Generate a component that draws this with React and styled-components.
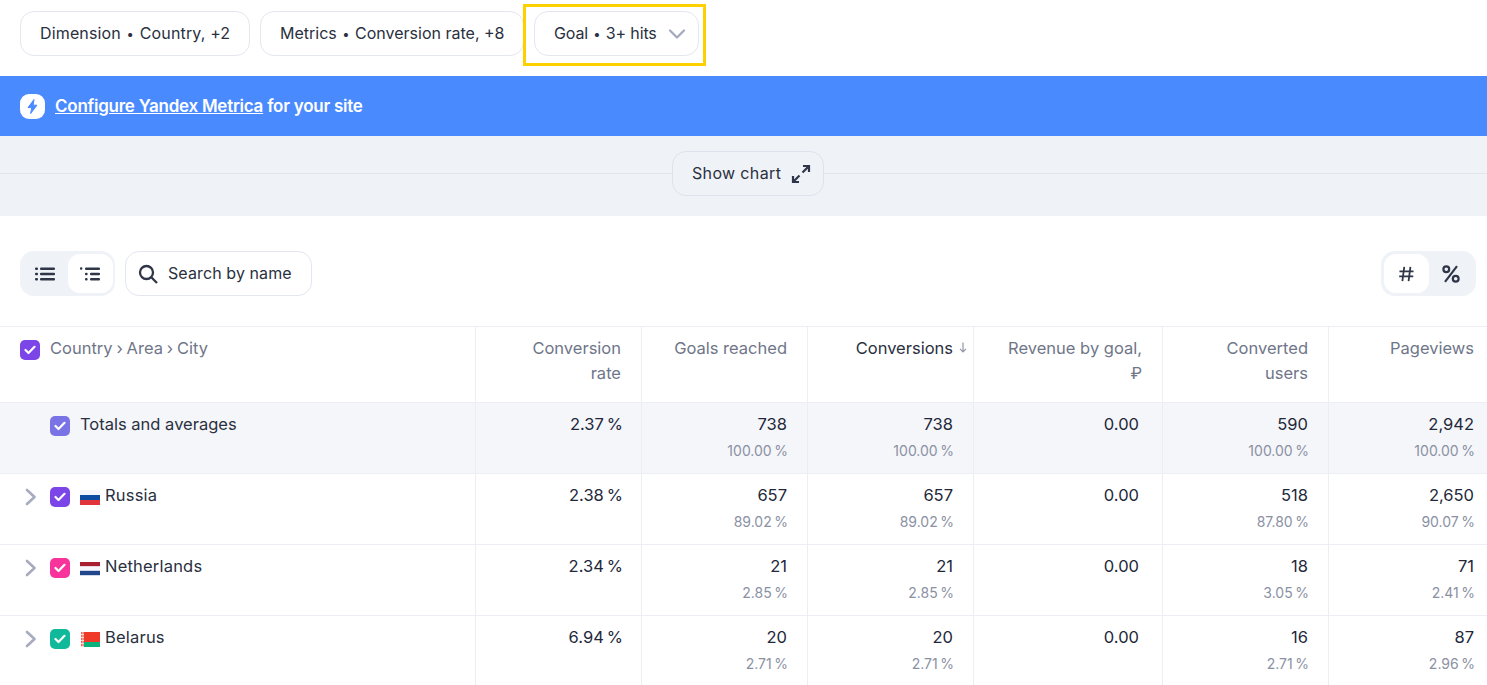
import React from "react";
import styled, { createGlobalStyle } from "styled-components";

const Global = createGlobalStyle`
  html, body { margin: 0; padding: 0; background: #fff; overflow: hidden; }
  body { font-family: Inter, "Noto Sans", sans-serif; color: #2a3040; font-size: 16px; }
`;

const Page = styled.div`
  width: 1487px;
  height: 685px;
  overflow: hidden;
  position: relative;
`;

const FilterBar = styled.div`
  display: flex;
  gap: 10px;
  height: 76px;
  padding: 11px 0 0 20px;
  box-sizing: border-box;
`;

const Pill = styled.button`
  height: 45px;
  width: ${(p) => p.$w}px;
  flex: none;
  box-sizing: border-box;
  border: 1px solid ${(p) => p.$line || "#e4e6f0"};
  border-radius: 14px;
  background: ${(p) => p.$bg || "#fff"};
  font: inherit;
  font-size: 16px;
  color: #2a3040;
  padding: 0 0 0 ${(p) => p.$pad ?? 19}px;
  display: flex;
  align-items: center;
  gap: ${(p) => p.$gap || 11}px;
  white-space: nowrap;
`;

const PillLabel = styled.span`
  position: relative;
  top: -1px;
  letter-spacing: ${(p) => p.$ls || 0}px;
`;

const Dot = styled.span`
  font-size: 13px;
  margin: 0 1px;
`;

const Highlight = styled.div`
  position: absolute;
  left: 523px;
  top: 4px;
  width: 183px;
  height: 62px;
  box-sizing: border-box;
  border: 3px solid #fdd000;
  pointer-events: none;
`;

const Banner = styled.div`
  height: 60px;
  background: #4a8aff;
  color: #fff;
  display: flex;
  align-items: center;
  padding-left: 20px;
  gap: 10px;
  font-weight: 600;
  font-size: 17px;
  letter-spacing: -0.25px;
  a { color: #fff; text-decoration: underline; }
`;

const ChartStrip = styled.div`
  height: 80px;
  box-sizing: border-box;
  padding: 15px 0 0 672px;
  background: #eff2f7;
  background-image: linear-gradient(#e2e5ee, #e2e5ee);
  background-size: 100% 1px;
  background-position: 0 37px;
  background-repeat: no-repeat;
`;

const Toolbar = styled.div`
  height: 110px;
  box-sizing: border-box;
  padding: 35px 11px 0 20px;
  display: flex;
  align-items: flex-start;
  gap: 10px;
`;

const Segment = styled.div`
  display: flex;
  height: 45px;
  box-sizing: border-box;
  padding: 3px 2px 3px 3px;
  background: #eff2f7;
  border-radius: 14px;
  margin-left: ${(p) => (p.$end ? "auto" : 0)};
`;

const SegItem = styled.div`
  width: 45px;
  height: 39px;
  box-sizing: border-box;
  padding-right: 1px;
  border-radius: 12px;
  background: ${(p) => (p.$active ? "#fff" : "transparent")};
  display: flex;
  align-items: center;
  justify-content: center;
`;

const Table = styled.div`
  border-top: 1px solid #eceef4;
`;

const Row = styled.div`
  display: grid;
  grid-template-columns: 475px 166px 166px 166px 189px 166px 159px;
  height: ${(p) => p.$h || 71}px;
  box-sizing: border-box;
  border-bottom: 1px solid #eceef4;
  background: ${(p) => p.$bg || "#fff"};
`;

const NameCell = styled.div`
  display: flex;
  align-items: flex-start;
  padding: 10px 0 0 ${(p) => p.$pad || 20}px;
  box-sizing: border-box;
`;

const NameText = styled.span`
  font-size: 16.5px;
  line-height: 24px;
  margin-top: -1px;
  letter-spacing: ${(p) => p.$ls || 0}px;
  word-spacing: ${(p) => p.$ws || 0}px;
  color: ${(p) => p.$c || "#2a3040"};
  margin-left: ${(p) => p.$ml ?? 10}px;
`;

const Arrow = styled.span`
  width: 20px;
  height: 24px;
  margin: 1px 10px 0 0;
  display: flex;
  align-items: center;
  justify-content: center;
  padding-left: 1px;
  box-sizing: border-box;
`;

const Check = styled.span`
  width: 20px;
  height: 20px;
  margin-top: 3px;
  border-radius: 5px;
  background: ${(p) => p.$c};
  display: flex;
  align-items: center;
  justify-content: center;
  flex: none;
`;

const FlagBox = styled.span`
  margin: 5px 0 0 10px;
  width: 20px;
  height: 15px;
  display: block;
  flex: none;
`;

const HeadCell = styled.div`
  border-left: 1px solid #eceef4;
  padding: 9px ${(p) => (p.$last ? 13 : 20)}px 0 0;
  text-align: right;
  font-size: 16.5px;
  line-height: 25px;
  color: ${(p) => (p.$dark ? "#2a3040" : "#6f7689")};
  position: relative;
`;

const SortMark = styled.span`
  position: absolute;
  right: 6px;
  top: 14px;
  font-size: 0;
`;

const Cell = styled.div`
  border-left: 1px solid #eceef4;
  padding: 9px ${(p) => p.$pr}px 0 0;
  text-align: right;
`;

const Value = styled.div`
  font-size: 16.5px;
  line-height: 24px;
  color: #22283a;
`;

const Share = styled.div`
  font-size: 14px;
  line-height: 20px;
  margin: 5px -1px 0 0;
  color: #8a91a3;
`;

const ink = "#2f3648";

const CheckIcon = () => (
  <svg width="12" height="10" viewBox="0 0 12 10" fill="none">
    <path d="M1.5 5l3 3 6-6.2" stroke="#fff" strokeWidth="2.2" strokeLinecap="round" strokeLinejoin="round" />
  </svg>
);

const Chevron = () => (
  <svg width="12" height="18" viewBox="0 0 12 18" fill="none">
    <path d="M2 2l7.5 7L2 16" stroke="#a6abbf" strokeWidth="2.6" strokeLinecap="round" strokeLinejoin="round" />
  </svg>
);

const ChevronDown = () => (
  <svg width="18" height="12" viewBox="0 0 18 12" fill="none">
    <path d="M2 2.5l7 7 7-7" stroke="#a3a9bd" strokeWidth="2.2" strokeLinecap="round" strokeLinejoin="round" />
  </svg>
);

const Bolt = () => (
  <svg width="25" height="25" viewBox="0 0 25 25">
    <rect width="25" height="25" rx="9" fill="#fff" />
    <path d="M14 5.5L8 13.6h3.7l-1 5.9 6.2-8.3h-3.8z" fill="#4a8aff" stroke="#4a8aff" strokeWidth="1" strokeLinejoin="round" />
  </svg>
);

const Expand = () => (
  <svg width="20" height="20" viewBox="0 0 20 20" fill="none" stroke={ink} strokeWidth="2.2">
    <path d="M12 2h6v6M18 2l-6.5 6.5M8 18H2v-6M2 18l6.5-6.5" />
  </svg>
);

const ListIcon = () => (
  <svg width="20" height="14" viewBox="0 0 20 14" fill={ink}>
    <rect x="0" y="0.5" width="3" height="2.6" rx="1" />
    <rect x="0" y="5.7" width="3" height="2.6" rx="1" />
    <rect x="0" y="10.9" width="3" height="2.6" rx="1" />
    <rect x="5" y="0.5" width="15" height="2.6" rx="1" />
    <rect x="5" y="5.7" width="15" height="2.6" rx="1" />
    <rect x="5" y="10.9" width="15" height="2.6" rx="1" />
  </svg>
);

const TreeIcon = () => (
  <svg width="20" height="14" viewBox="0 0 20 14" fill={ink}>
    <rect x="0" y="0.3" width="2.4" height="2.4" rx="1" />
    <rect x="5" y="5.7" width="2.6" height="2.6" rx="1" />
    <rect x="5" y="10.9" width="2.6" height="2.6" rx="1" />
    <rect x="5" y="0.5" width="15" height="2.6" rx="1" />
    <rect x="10" y="5.7" width="10" height="2.6" rx="1" />
    <rect x="10" y="10.9" width="10" height="2.6" rx="1" />
  </svg>
);

const Search = () => (
  <svg width="20" height="20" viewBox="0 0 20 20" fill="none" stroke={ink} strokeWidth="2.3">
    <circle cx="8.5" cy="8.5" r="6.5" />
    <path d="M13.3 13.3L19 19" />
  </svg>
);

const Hash = () => (
  <svg width="15" height="16" viewBox="0 0 16 16" fill="none" stroke={ink} strokeWidth="1.9">
    <path d="M5.6 0.5L3.6 15.5M12.2 0.5L10.2 15.5M0.5 5.2h15M0.2 10.6h15" />
  </svg>
);

const Percent = () => (
  <svg width="18" height="18" viewBox="0 0 18 18" fill="none" stroke={ink} strokeWidth="2.2">
    <circle cx="4.3" cy="4.3" r="2.9" />
    <circle cx="13.7" cy="13.7" r="2.9" />
    <path d="M15 1.2L3 16.8" />
  </svg>
);

const SortArrow = () => (
  <svg width="8" height="11" viewBox="0 0 8 11" fill="none" stroke="#9095a8" strokeWidth="1.2">
    <path d="M4 0.5v9M1 6.8l3 3 3-3" />
  </svg>
);

const Flag = ({ code }) => {
  if (code === "ru")
    return (
      <FlagBox>
        <svg width="20" height="15" viewBox="0 0 20 15">
          <rect width="20" height="5" fill="#f5f6fb" />
          <rect y="5" width="20" height="5" fill="#0c4da2" />
          <rect y="10" width="20" height="5" fill="#e0353a" />
        </svg>
      </FlagBox>
    );
  if (code === "nl")
    return (
      <FlagBox>
        <svg width="20" height="15" viewBox="0 0 20 15">
          <rect y="1" width="20" height="4.4" fill="#a91f32" />
          <rect y="5.4" width="20" height="4.4" fill="#f5f6fb" />
          <rect y="9.8" width="20" height="4.4" fill="#21468b" />
        </svg>
      </FlagBox>
    );
  return (
    <FlagBox>
      <svg width="20" height="15" viewBox="0 0 20 15">
        <rect x="4" width="16" height="10" fill="#ef3a2a" />
        <rect x="4" y="10" width="16" height="5" fill="#0bb27e" />
        <rect x="1" width="3" height="15" fill="#f9d7d2" />
        <path d="M1 1h3M1 4h3M1 7h3M1 10h3M1 13h3" stroke="#e5493a" strokeWidth="1.4" strokeDasharray="1.5 .8" />
      </svg>
    </FlagBox>
  );
};

const rows = [
  { name: "Russia", code: "ru", color: "#7c45e8", v: ["2.38\u2009%", ["657", "89.02\u2009%"], ["657", "89.02\u2009%"], "0.00", ["518", "87.80\u2009%"], ["2,650", "90.07\u2009%"]] },
  { name: "Netherlands", code: "nl", color: "#f8339b", v: ["2.34\u2009%", ["21", "2.85\u2009%"], ["21", "2.85\u2009%"], "0.00", ["18", "3.05\u2009%"], ["71", "2.41\u2009%"]] },
  { name: "Belarus", code: "by", color: "#10b99a", v: ["6.94\u2009%", ["20", "2.71\u2009%"], ["20", "2.71\u2009%"], "0.00", ["16", "2.71\u2009%"], ["87", "2.96\u2009%"]] },
];

const totals = ["2.37\u2009%", ["738", "100.00\u2009%"], ["738", "100.00\u2009%"], "0.00", ["590", "100.00\u2009%"], ["2,942", "100.00\u2009%"]];

const paddings = [18, 20, 20, 23, 20, 13];

const Values = ({ v }) =>
  v.map((c, i) => (
    <Cell key={i} $pr={paddings[i]}>
      <Value>{Array.isArray(c) ? c[0] : c}</Value>
      {Array.isArray(c) && <Share>{c[1]}</Share>}
    </Cell>
  ));

export default function App() {
  return (
    <Page>
      <Global />
      <FilterBar>
        <Pill $w={230}><PillLabel $ls={0.15}>Dimension <Dot>•</Dot> Country, +2</PillLabel></Pill>
        <Pill $w={264}><PillLabel>Metrics <Dot>•</Dot> Conversion rate, +8</PillLabel></Pill>
        <Pill $w={165} $gap={11}><PillLabel $ls={-0.15}>Goal <Dot>•</Dot> 3+ hits</PillLabel><ChevronDown /></Pill>
      </FilterBar>
      <Highlight />
      <Banner>
        <Bolt />
        <span><a>Configure Yandex Metrica</a> for your site</span>
      </Banner>
      <ChartStrip>
        <Pill $w={152} $bg="#eff2f7" $line="#dfe2ec" $gap={10}><PillLabel $ls={0.35}>Show chart</PillLabel><Expand /></Pill>
      </ChartStrip>
      <Toolbar>
        <Segment>
          <SegItem><ListIcon /></SegItem>
          <SegItem $active><TreeIcon /></SegItem>
        </Segment>
        <Pill $w={187} $pad={12} $gap={10}><Search /><PillLabel $ls={0.1}>Search by name</PillLabel></Pill>
        <Segment $end>
          <SegItem $active><Hash /></SegItem>
          <SegItem><Percent /></SegItem>
        </Segment>
      </Toolbar>
      <Table>
        <Row $h={76}>
          <NameCell>
            <Check $c="#7c45e8"><CheckIcon /></Check>
            <NameText $c="#6f7689" $ws={-0.8}>Country › Area › City</NameText>
          </NameCell>
          <HeadCell>Conversion<br />rate</HeadCell>
          <HeadCell>Goals reached</HeadCell>
          <HeadCell $dark>Conversions<SortMark><SortArrow /></SortMark></HeadCell>
          <HeadCell>Revenue by goal,<br />₽</HeadCell>
          <HeadCell>Converted<br />users</HeadCell>
          <HeadCell $last>Pageviews</HeadCell>
        </Row>
        <Row $bg="#f5f6fa">
          <NameCell $pad={50}>
            <Check $c="#7a73e6"><CheckIcon /></Check>
            <NameText>Totals and averages</NameText>
          </NameCell>
          <Values v={totals} />
        </Row>
        {rows.map((r) => (
          <Row key={r.name}>
            <NameCell>
              <Arrow><Chevron /></Arrow>
              <Check $c={r.color}><CheckIcon /></Check>
              <Flag code={r.code} />
              <NameText $ml={5} $ls={0.2}>{r.name}</NameText>
            </NameCell>
            <Values v={r.v} />
          </Row>
        ))}
      </Table>
    </Page>
  );
}
